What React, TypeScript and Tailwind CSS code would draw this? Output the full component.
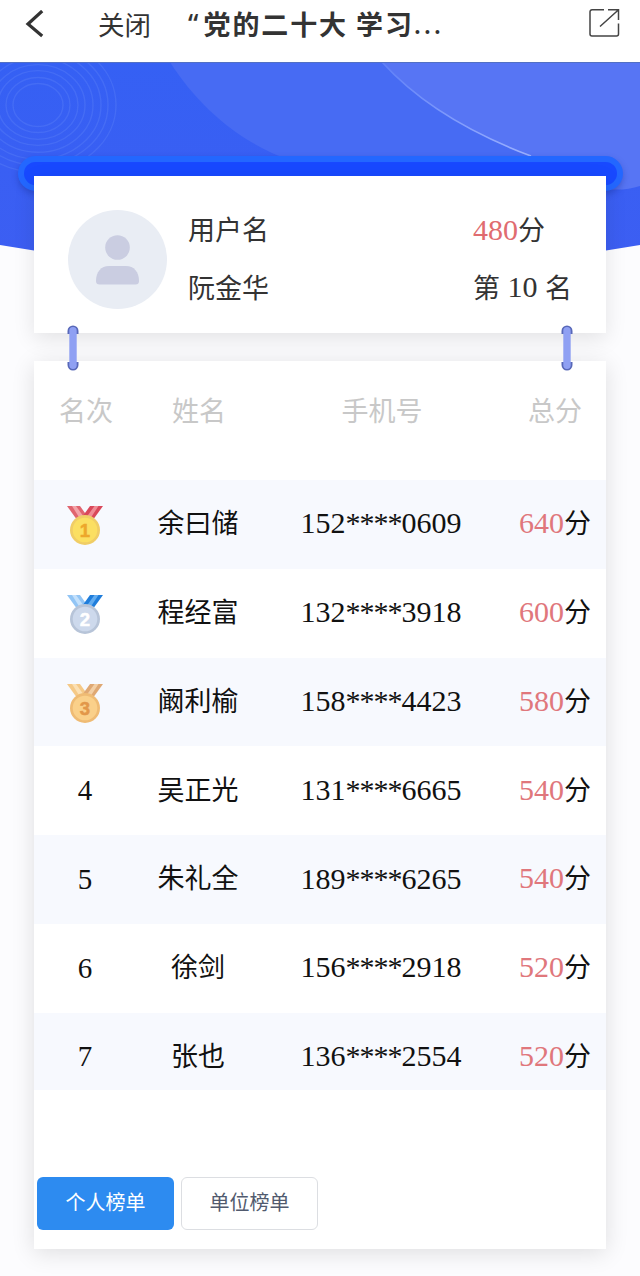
interface RankRow {
  rank: number;
  name: string;
  prefix: string;
  suffix: string;
  score: number;
}

interface MedalColors {
  left: string;
  leftStripe: string;
  right: string;
  rightStripe: string;
  rim: string;
  face: string;
  digit: string;
}

const rows: RankRow[] = [
  { rank: 1, name: '余曰储', prefix: '152', suffix: '0609', score: 640 },
  { rank: 2, name: '程经富', prefix: '132', suffix: '3918', score: 600 },
  { rank: 3, name: '阚利榆', prefix: '158', suffix: '4423', score: 580 },
  { rank: 4, name: '吴正光', prefix: '131', suffix: '6665', score: 540 },
  { rank: 5, name: '朱礼全', prefix: '189', suffix: '6265', score: 540 },
  { rank: 6, name: '徐剑', prefix: '156', suffix: '2918', score: 520 },
  { rank: 7, name: '张也', prefix: '136', suffix: '2554', score: 520 },
];

const medals: Record<number, MedalColors> = {
  1: { left: '#e0646f', leftStripe: '#f3a3a8', right: '#d9485a', rightStripe: '#f08c95', rim: '#f0cd66', face: '#fbdf62', digit: '#eda72c' },
  2: { left: '#92c5f5', leftStripe: '#c3e0fb', right: '#1f7ddb', rightStripe: '#62acf0', rim: '#b7c4d8', face: '#cdd9ec', digit: '#ffffff' },
  3: { left: '#f5c987', leftStripe: '#fbe0b4', right: '#dfa873', rightStripe: '#f3cfa4', rim: '#efbb74', face: '#fad08a', digit: '#e2974a' },
};

const columns = 'grid grid-cols-[102px_124px_242px_104px] text-center';

function Medal({ rank }: { rank: number }) {
  const c = medals[rank];

  return (
    <svg className="mt-1" width="38" height="42" viewBox="0 0 38 42">
      <path d="M1 1H14L24 15L14 19Z" fill={c.left} />
      <path d="M6 1H10L20 15L16 17Z" fill={c.leftStripe} />
      <path d="M37 1H24L14 15L24 19Z" fill={c.right} />
      <path d="M32.5 1H28.5L18.5 15L22 17Z" fill={c.rightStripe} />
      <circle cx="19" cy="25" r="15" fill={c.rim} />
      <circle cx="19" cy="25" r="12.3" fill={c.face} />
      <text x="19" y="31.5" textAnchor="middle" fontSize="18.5" fontWeight="700" fontFamily="Liberation Sans, sans-serif" fill={c.digit} stroke={c.digit} strokeWidth="0.5">
        {rank}
      </text>
    </svg>
  );
}

function HeroBackground() {
  return (
    <svg className="absolute left-0 top-[62px]" width="640" height="210" viewBox="0 62 640 210">
      <defs>
        <linearGradient id="sky" x1="0" y1="0" x2="0" y2="1">
          <stop offset="0" stopColor="#3560f4" />
          <stop offset="1" stopColor="#3d5ef2" />
        </linearGradient>
        <linearGradient id="arc" x1="0" y1="0" x2="1" y2="1">
          <stop offset="0" stopColor="#5f80f8" />
          <stop offset="1" stopColor="#9bb1ff" />
        </linearGradient>
        <clipPath id="hero">
          <path d="M0 62H640V245Q320 300 0 245Z" />
        </clipPath>
      </defs>
      <g clipPath="url(#hero)">
        <rect y="62" width="640" height="210" fill="url(#sky)" />
        <path d="M170 62C200 110 245 145 290 160L640 180V62Z" fill="#476bf3" />
        <path d="M382 62C420 104 470 133 531 156C570 185 610 196 640 186V62Z" fill="#5775f4" />
        <path d="M382 62C420 104 470 133 531 156" fill="none" stroke="url(#arc)" strokeWidth="1.6" />
        <g fill="none" stroke="#5b80f8" strokeOpacity="0.4" strokeWidth="1.4">
          {[25, 32, 40, 47, 55, 63, 70, 78].map((r) => (
            <ellipse key={r} cx="38" cy="105" rx={r} ry={r * 0.86} />
          ))}
        </g>
        <path d="M0 62.5H640" stroke="#5270c4" strokeWidth="1" />
      </g>
    </svg>
  );
}

function Clip({ className }: { className: string }) {
  return (
    <svg className={`absolute top-[148.5px] z-10 ${className}`} width="12" height="46" viewBox="0 0 12 46">
      <path d="M0.5 9V6a5.5 5.5 0 0 1 11 0v3ZM0.5 37v3a5.5 5.5 0 0 0 11 0v-3Z" fill="#5868b8" />
      <rect x="2.3" y="2" width="7.4" height="42" rx="3.7" fill="#8fa0f3" />
    </svg>
  );
}

function NavBar() {
  return (
    <header className="relative flex h-[62px] items-start bg-white text-[#333]">
      <svg className="ml-[25px] mt-2.5 shrink-0" width="20" height="28" viewBox="0 0 20 28" fill="none" stroke="currentColor" strokeWidth="3.2">
        <path d="M17.2 1L3 14L17.2 26" />
      </svg>
      <span className="ml-[53px] mt-1 text-[26.5px] leading-10">关闭</span>
      <h1 className="ml-[25px] mt-1 flex whitespace-pre text-[27px] leading-10 font-bold tracking-[1.9px]">
        <span className="w-[27.5px] pl-3 font-['Noto_Sans'] font-medium tracking-normal">“</span>
        党的二十大 学习<span className="font-['Noto_Sans'] font-medium tracking-[2.6px]">...</span>
      </h1>
      <svg className="ml-auto mr-5 mt-2 shrink-0" width="32" height="30" viewBox="0 0 32 30" fill="none" stroke="#444" strokeWidth="1.5">
        <path d="M16 1.8H4a2 2 0 0 0-2 2V26a2 2 0 0 0 2 2H28.5a2 2 0 0 0 2-2V15.5M20 1.8H30.5V12M30 2.3L12 18.5" />
      </svg>
    </header>
  );
}

function UserCard() {
  return (
    <section className="relative flex h-[157px] bg-white text-[27px] leading-10 text-[#333] shadow-[0_6px_20px_rgba(0,0,0,0.1)]">
      <svg className="ml-[34px] mt-[34px] shrink-0" width="99" height="99" viewBox="0 0 99 99">
        <circle cx="49.5" cy="49.5" r="49.5" fill="#e9edf4" />
        <circle cx="49.5" cy="37.5" r="12.3" fill="#cacde1" />
        <path d="M28 71C28 62 33 56 41 56H58C66 56 71 62 71 71Q71 74.5 67.5 74.5H31.5Q28 74.5 28 71Z" fill="#cacde1" />
      </svg>
      <div className="ml-[21px] mt-[33px] flex flex-col gap-[18px]">
        <span>用户名</span>
        <span>阮金华</span>
      </div>
      <div className="ml-auto mr-[34px] mt-[33px] flex w-[99px] flex-col gap-[18px] whitespace-nowrap">
        <span>
          <span className="font-['Liberation_Serif'] text-[30px] leading-none text-[#e06c70]">480</span>分
        </span>
        <span className="flex justify-between">
          第<span className="font-['Liberation_Serif'] text-[30px]">10</span>名
        </span>
      </div>
    </section>
  );
}

function Ranking() {
  return (
    <section className="mt-7 flex h-[888px] flex-col bg-white shadow-[0_4px_22px_rgba(0,0,0,0.12)]">
      <div className={`${columns} h-[119px] shrink-0 pt-[29px] pl-px text-[27px] leading-10 text-[#c8c8c8]`}>
        <span>名次</span>
        <span>姓名</span>
        <span>手机号</span>
        <span>总分</span>
      </div>
      <div className="h-[610px] shrink-0 overflow-hidden">
        {rows.map((row) => (
          <div
            key={row.rank}
            className={`${columns} h-[88.8px] items-center text-[27px] text-[#111] odd:bg-[#f7f9fe]`}
          >
            <div className="flex justify-center font-['Liberation_Serif'] text-[29px]">
              {row.rank <= 3 ? <Medal rank={row.rank} /> : row.rank}
            </div>
            <div className="-mt-1">{row.name}</div>
            <div className="-mt-[3px] font-['Liberation_Serif'] text-[30px]">
              {row.prefix}
              <span className="tracking-[-1px]">****</span>
              {row.suffix}
            </div>
            <div className="-mt-1 pl-0.5 whitespace-nowrap">
              <span className="font-['Liberation_Serif'] text-[30px] leading-none text-[#e0777c]">{row.score}</span>分
            </div>
          </div>
        ))}
      </div>
      <div className="mt-auto mb-[19px] ml-[3px] flex gap-[7px] text-[20px]">
        <button className="h-[53px] w-[137px] rounded-md bg-[#2d8bf0] pb-1 text-white">个人榜单</button>
        <button className="h-[53px] w-[137px] rounded-md border border-[#dcdee2] bg-white pb-1 text-[#515a6e]">
          单位榜单
        </button>
      </div>
    </section>
  );
}

export default function App() {
  return (
    <div className="relative h-[1276px] w-[640px] overflow-hidden bg-[#fcfcfe] font-['Noto_Sans_CJK_SC',sans-serif]">
      <HeroBackground />
      <NavBar />
      <main className="relative pt-[94px]">
        <div className="mx-[17.5px] h-[35px] rounded-full border-[6px] border-[#2367ff] bg-[#1849ff] shadow-[0_3px_6px_rgba(20,40,140,0.35)]" />
        <div className="relative mx-[34px] -mt-[15px]">
          <UserCard />
          <Clip className="left-[33px]" />
          <Clip className="right-[33px]" />
          <Ranking />
        </div>
      </main>
    </div>
  );
}
